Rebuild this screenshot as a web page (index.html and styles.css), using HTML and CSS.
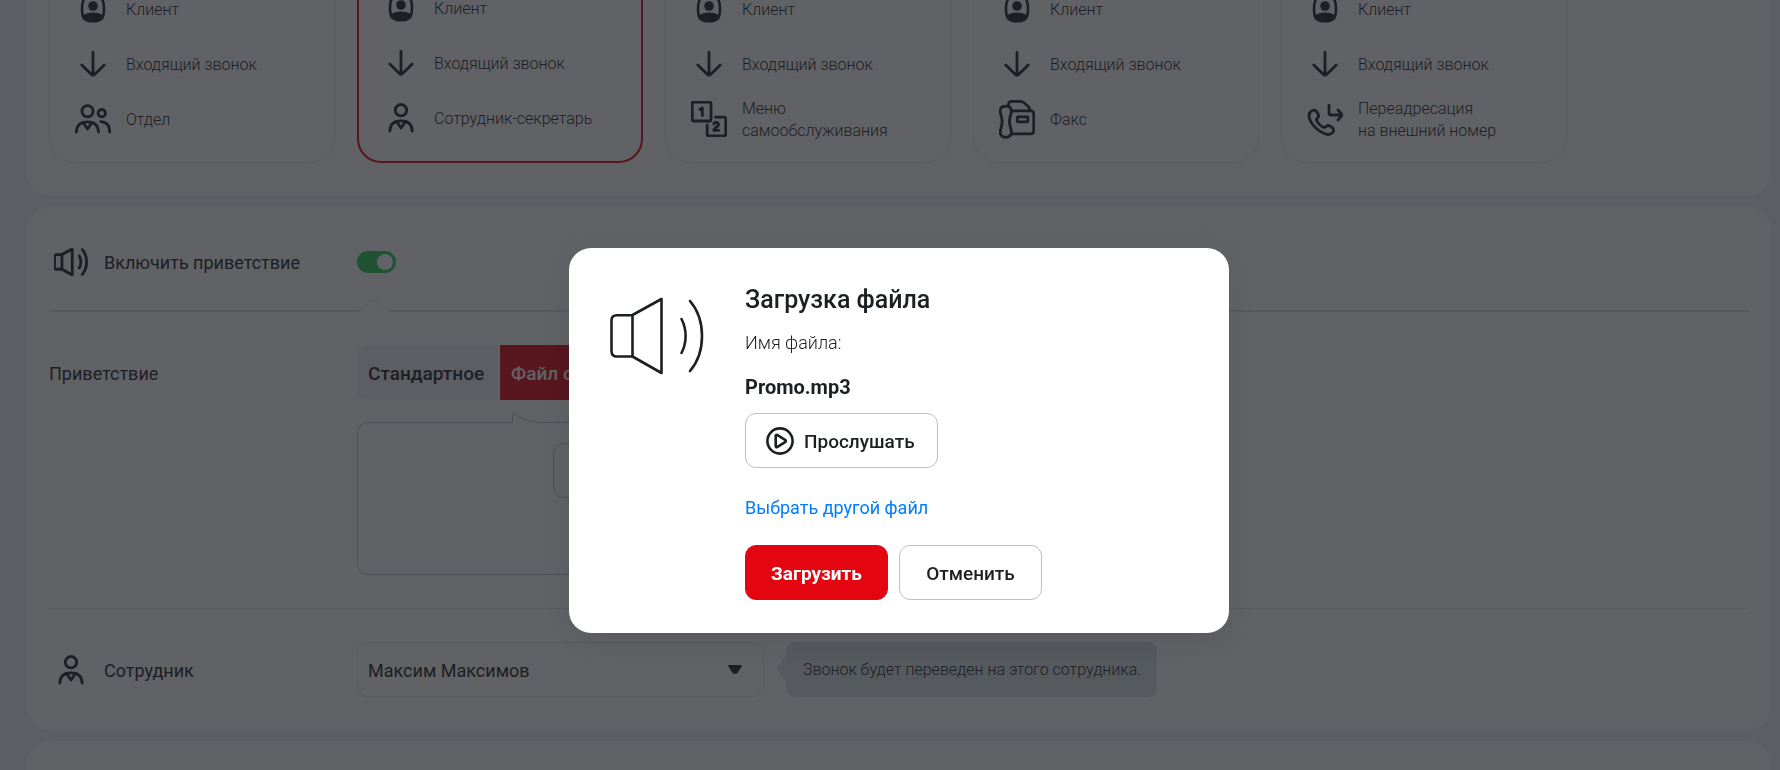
FILE: index.html
```html
<!DOCTYPE html>
<html lang="ru">
<head>
<meta charset="utf-8">
<title>Загрузка файла</title>
<link rel="stylesheet" href="styles.css">
</head>
<body>
<svg class="sprite" aria-hidden="true">
  <symbol id="i-client" viewBox="0 0 36 36">
    <path d="M18 4.700c-8.600 0-11 4-11 13.300s2.400 12.300 11 12.300 11-3 11-12.300S26.600 4.700 18 4.700z" stroke-width="2.600"/>
    <circle cx="18" cy="15" r="4.800" fill="currentColor" stroke="none"/>
    <path d="M7.500 25c3-2 6.500-3 10.500-3s7.500 1 10.500 3c-1.500 4.500-4.500 5.300-10.500 5.300S9 29.500 7.500 25z" fill="currentColor" stroke-width="1"/>
  </symbol>
  <symbol id="i-arrow" viewBox="0 0 36 36">
    <path d="M18 6.500v22.500M6.800 19l9.400 9.300c1.200 1.200 2.400 1.200 3.600 0L29.200 19"/>
  </symbol>
  <symbol id="i-person" viewBox="0 0 36 36">
    <circle cx="18" cy="10.200" r="5.700"/>
    <path d="M6.800 31C7 24.500 10.500 20.800 18 20.800S29 24.500 29.200 31"/>
    <path d="M13.500 21.500 18 28l4.500-6.500"/>
  </symbol>
  <symbol id="i-group" viewBox="0 0 36 36">
    <circle cx="12.500" cy="10.200" r="5.600"/>
    <path d="M1.300 31c.2-6.500 3.700-10.200 11.200-10.200S23.300 24.500 23.500 31"/>
    <path d="M8 21.500l4.500 6.500 4.500-6.500"/>
    <circle cx="26.800" cy="12.200" r="3.700"/>
    <path d="M26 20.700c5.500.3 8.600 3.800 8.700 10.300"/>
  </symbol>
  <symbol id="i-menu" viewBox="0 0 36 36">
    <rect x="1.200" y="1.200" width="18.800" height="18.800" rx="1.500"/>
    <path d="M24.500 16.200h8.800q1.500 0 1.500 1.500v15.600q0 1.500-1.500 1.500H17.700q-1.500 0-1.500-1.500v-9.300"/>
    <path d="M9 8.500l2.300-1.700v7.700M22.800 23c.3-2.200 5-2 4.700.5-.2 2-3.700 3-4.900 5.800h5.200"/>
  </symbol>
  <symbol id="i-fax" viewBox="0 0 36 40">
    <path d="M9.500 7V5.500q0-3.200 3.200-3.200h8.800q1.800 0 3.200 1.200l4.500 4q1.500 1.400 1.700 4"/>
    <path d="M12.500 11.800h19.300q3 0 3 3v17q0 3-3 3H12.500"/>
    <path d="M6.800 7.200c4 0 5.600 1.800 5.600 5s-1.900 5-1.900 10.300 1.900 7 1.900 10.300-1.600 5.500-5.600 5.500-5.600-2.300-5.600-5.500 1.900-5 1.900-10.300-1.900-7-1.900-10.300 1.600-5 5.600-5z"/>
    <rect x="18.300" y="17.800" width="10.600" height="5" rx=".8"/>
  </symbol>
  <symbol id="i-forward" viewBox="0 0 36 36">
    <path d="M4.500 10c2-1.500 4-1 5.200.8l1.300 2.100c1 1.600.6 3-.5 4-1.500 1.400-1.300 2.400-.3 3.800 1.300 2 3 3.700 5 5 1.400 1 2.700 1 4-.3 1-1 2.500-1.300 4-.2l2 1.500c1.600 1.200 1.900 3.200.6 4.700-2.500 2.700-6.600 2.900-11.700-.5C9.300 28 5.300 24 3.200 19.500 1.200 15 1.500 12 4.500 10z"/>
    <path d="M22 4.300v7.400q0 2.300 2.300 2.300h9.500M31 9l3.200 3.700q1.200 1.300 0 2.600L31 19"/>
  </symbol>
  <symbol id="i-speaker" viewBox="0 0 96 78">
    <path d="M22.500 18 51.500 2v74L22.500 59.500"/>
    <path d="M22.500 18.200H7q-5.500 0-5.500 5v31q0 5.300 5.500 5.300h15.500z"/>
    <path d="M71.500 22c5.500 10.500 5.500 23.500 0 34M80 4c16 18.500 16 51.500 0 70"/>
  </symbol>
  <symbol id="i-play" viewBox="0 0 28 28">
    <circle cx="14" cy="14" r="12.600"/>
    <path d="M9.700 9.200q0-2 1.800-1l7.600 4.700q1.500 1.100 0 2.200l-7.600 4.700q-1.800 1-1.800-1z"/>
  </symbol>
</svg>

<main class="page">
  <section class="panel panel-scenarios">
    <ul class="scenarios">
      <li class="scenario">
        <div class="step"><svg class="icon"><use href="#i-client"/></svg><span class="text">Клиент</span></div>
        <div class="step"><svg class="icon"><use href="#i-arrow"/></svg><span class="text">Входящий звонок</span></div>
        <div class="step"><svg class="icon"><use href="#i-group"/></svg><span class="text">Отдел</span></div>
      </li>
      <li class="scenario scenario-active">
        <div class="step"><svg class="icon"><use href="#i-client"/></svg><span class="text">Клиент</span></div>
        <div class="step"><svg class="icon"><use href="#i-arrow"/></svg><span class="text">Входящий звонок</span></div>
        <div class="step"><svg class="icon"><use href="#i-person"/></svg><span class="text">Сотрудник-секретарь</span></div>
      </li>
      <li class="scenario">
        <div class="step"><svg class="icon"><use href="#i-client"/></svg><span class="text">Клиент</span></div>
        <div class="step"><svg class="icon"><use href="#i-arrow"/></svg><span class="text">Входящий звонок</span></div>
        <div class="step"><svg class="icon"><use href="#i-menu"/></svg><span class="text">Меню<br>самообслуживания</span></div>
      </li>
      <li class="scenario">
        <div class="step"><svg class="icon"><use href="#i-client"/></svg><span class="text">Клиент</span></div>
        <div class="step"><svg class="icon"><use href="#i-arrow"/></svg><span class="text">Входящий звонок</span></div>
        <div class="step"><svg class="icon icon-tall"><use href="#i-fax"/></svg><span class="text">Факс</span></div>
      </li>
      <li class="scenario">
        <div class="step"><svg class="icon"><use href="#i-client"/></svg><span class="text">Клиент</span></div>
        <div class="step"><svg class="icon"><use href="#i-arrow"/></svg><span class="text">Входящий звонок</span></div>
        <div class="step"><svg class="icon"><use href="#i-forward"/></svg><span class="text">Переадресация<br>на внешний номер</span></div>
      </li>
    </ul>
  </section>

  <section class="panel">
    <div class="field field-head">
      <label class="label" for="greet"><svg class="icon icon-sound"><use href="#i-speaker"/></svg><span class="text">Включить приветствие</span></label>
      <input class="toggle" id="greet" type="checkbox" checked>
      <svg class="notch" viewBox="0 0 34 14"><path class="notch-fill" d="M0 14 14.500 2.500q2.500-2 5 0L34 14z"/><path d="M0 12.500 14.500 2q2.500-2 5 0L34 12.500"/></svg>
    </div>
    <div class="field field-greeting">
      <span class="label label-top"><span class="text">Приветствие</span></span>
      <div class="greeting">
        <div class="tabs">
          <button class="tab" type="button">Стандартное</button>
          <button class="tab tab-active" type="button">Файл с компьютера</button>
        </div>
        <div class="upload">
          <svg class="tail" viewBox="0 0 24 11"><path class="notch-fill" d="M.500 11V1.500q1-1.500 3 .500Q10 9 24 10v1z"/><path d="M.500 10.500V1.500q1-1.500 3 .500Q10 8.500 24 10"/></svg>
          <button class="button" type="button"><span class="text">Выбрать файл</span></button>
        </div>
      </div>
    </div>
    <div class="field field-employee">
      <label class="label" for="employee"><svg class="icon icon-label"><use href="#i-person"/></svg><span class="text">Сотрудник</span></label>
      <div class="employee">
        <div class="select">
          <select id="employee"><option>Максим Максимов</option></select>
          <svg class="caret" viewBox="0 0 14 9"><path d="M1.500 0h11q2 0 1 1.800L9.500 8q-2.500 2-5 0L.500 1.800Q-.500 0 1.500 0z"/></svg>
        </div>
        <p class="hint">Звонок будет переведен на этого сотрудника.</p>
      </div>
    </div>
  </section>

  <section class="panel panel-next"></section>
</main>

<div class="overlay">
  <div class="modal" role="dialog" aria-labelledby="title">
    <svg class="modal-icon"><use href="#i-speaker"/></svg>
    <div class="modal-body">
      <h1 class="title" id="title">Загрузка файла</h1>
      <p class="caption">Имя файла:</p>
      <p class="file">Promo.mp3</p>
      <button class="button button-play" type="button"><svg class="play"><use href="#i-play"/></svg><span class="text">Прослушать</span></button>
      <a class="link" href="#">Выбрать другой файл</a>
      <div class="actions">
        <button class="button button-primary" type="button"><span class="text">Загрузить</span></button>
        <button class="button" type="button"><span class="text">Отменить</span></button>
      </div>
    </div>
  </div>
</div>
</body>
</html>
```
FILE: styles.css
```css
* { box-sizing: border-box; }

body {
  margin: 0;
  height: 100vh;
  overflow: hidden;
  background: #f2f2f7;
  color: #1d2023;
  font: 400 18px/26px Roboto, "Liberation Sans", sans-serif;
}

p, h1, ul { margin: 0; padding: 0; }
button, select, input { font: inherit; color: inherit; margin: 0; }

svg { display: block; flex: none; fill: none; stroke: currentColor; stroke-linecap: round; stroke-linejoin: round; }
.sprite { position: absolute; width: 0; height: 0; }

/* Scrolled page under the dialog */
.page {
  display: flex;
  flex-direction: column;
  gap: 11px;
  height: calc(100vh + 60px);
  margin: -60px 9px 0 27px;
}

.panel { flex: none; padding: 0 22px; border-radius: 24px; background: #fff; }
.panel-scenarios { padding-top: 25px; padding-bottom: 33px; }
.panel-next { flex: 1; border-radius: 24px 24px 0 0; }

.scenarios { display: flex; gap: 22px; list-style: none; }

.scenario {
  display: flex;
  flex-direction: column;
  gap: 11px;
  width: 286px;
  padding: 21px 21px 21px 25px;
  border: 1px solid #e2e5eb;
  border-radius: 24px;
}

.scenario-active { padding: 19px 20px 21px 24px; border: 2px solid #e30611; }

.step {
  display: flex;
  gap: 15px;
  align-items: center;
  height: 44px;
  font-size: 16px;
  font-weight: 300;
  line-height: 22px;
}

.icon { width: 36px; height: 36px; stroke-width: 2.8; overflow: visible; }
.icon-tall { height: 40px; }
.icon-label { width: 44px; }

.field { display: grid; grid-template-columns: 308px 1fr; align-items: center; }
.field-head { position: relative; padding: 33px 0 26px; min-height: 105px; border-bottom: 2px solid #dfe2e8; }
.field-greeting { padding: 33px 0; align-items: start; border-bottom: 1px solid #e2e5eb; }
.field-employee { padding: 33px 0; }

.label { display: flex; align-items: center; gap: 11px; min-height: 44px; }
.label-top { min-height: 55px; }
.icon-sound { width: 34px; height: 28px; margin: 0 5px; stroke-width: 8; }
.text { padding-top: 2px; }

.toggle {
  appearance: none;
  display: flex;
  justify-content: flex-end;
  width: 39px;
  height: 22px;
  padding: 3px;
  border-radius: 11px;
  background: #26cd58;
}
.toggle::before { content: ""; width: 16px; height: 16px; border-radius: 8px; background: #fff; }

.notch { position: absolute; left: 308px; bottom: -3px; width: 34px; height: 14px; stroke: #dfe2e8; }
.notch-fill { fill: #fff; stroke: none; }

.greeting { display: flex; flex-direction: column; gap: 22px; align-items: flex-start; }
.tabs { display: flex; gap: 2px; }
.tab { height: 55px; padding: 2px 14px 0 11px; border: 0; border-radius: 11px 0 0 11px; background: #f2f2f7; font-weight: 500; font-size: 19px; }
.tab-active { border-radius: 0 11px 11px 0; background: #e30611; color: #fff; }

.upload {
  position: relative;
  display: flex;
  justify-content: center;
  align-items: flex-start;
  width: 568px;
  height: 153px;
  padding-top: 20px;
  border: 1px solid #bcc0c8;
  border-radius: 11px;
}
.tail { position: absolute; left: 154px; top: -11px; width: 24px; height: 11px; stroke: #bcc0c8; }

.employee { display: flex; align-items: center; gap: 22px; }
.select { display: grid; align-items: center; width: 407px; }
.select select, .caret { grid-area: 1 / 1; }
.select select {
  appearance: none;
  width: 100%;
  height: 55px;
  padding: 2px 44px 0 10px;
  border: 1px solid #e2e5eb;
  border-radius: 11px;
  background: transparent;
}
.caret { justify-self: end; width: 14px; height: 9px; margin-right: 22px; fill: currentColor; stroke: none; pointer-events: none; }

.hint { position: relative; padding: 15px 16px 14px 17px; border-radius: 9px; background: #dde2e8; font-size: 16px; font-weight: 300; }
.hint::before {
  content: "";
  position: absolute;
  right: 100%;
  top: 14px;
  border: solid transparent;
  border-width: 13px 10px 13px 0;
  border-right-color: #dde2e8;
}

/* Dialog */
.overlay {
  position: fixed;
  inset: 0;
  display: flex;
  justify-content: center;
  align-items: center;
  padding: 111px 0 0 18px;
  background: rgba(29, 32, 35, .7);
}

.modal {
  display: flex;
  gap: 39px;
  width: 660px;
  padding: 34px 40px 33px 41px;
  border-radius: 22px;
  background: #fff;
  box-shadow: 0 12px 20px rgba(0, 0, 0, .05), 0 4px 44px rgba(0, 0, 0, .03);
}
.modal-icon { width: 96px; height: 78px; margin-top: 15px; stroke-width: 2.6; overflow: visible; }
.modal-body { display: flex; flex-direction: column; align-items: flex-start; }

.title { font-size: 25px; line-height: 36px; font-weight: 500; }
.caption { margin-top: 12px; font-weight: 300; }
.file { margin: 18px 0 13px; font-size: 20px; font-weight: 700; }
.link { margin: 27px 0 24px; color: #007cff; text-decoration: none; }

.button {
  display: flex;
  align-items: center;
  justify-content: center;
  min-width: 143px;
  height: 55px;
  padding: 0 22px;
  border: 1px solid #bcc0c8;
  border-radius: 11px;
  background: #fff;
  font-size: 19px;
  font-weight: 500;
}
.button-play { gap: 10px; padding: 0 22px 0 20px; }
.play { width: 28px; height: 28px; stroke-width: 2.6; }
.button-primary { border-color: #e30611; background: #e30611; color: #fff; font-weight: 700; }
.actions { display: flex; gap: 11px; }
```
